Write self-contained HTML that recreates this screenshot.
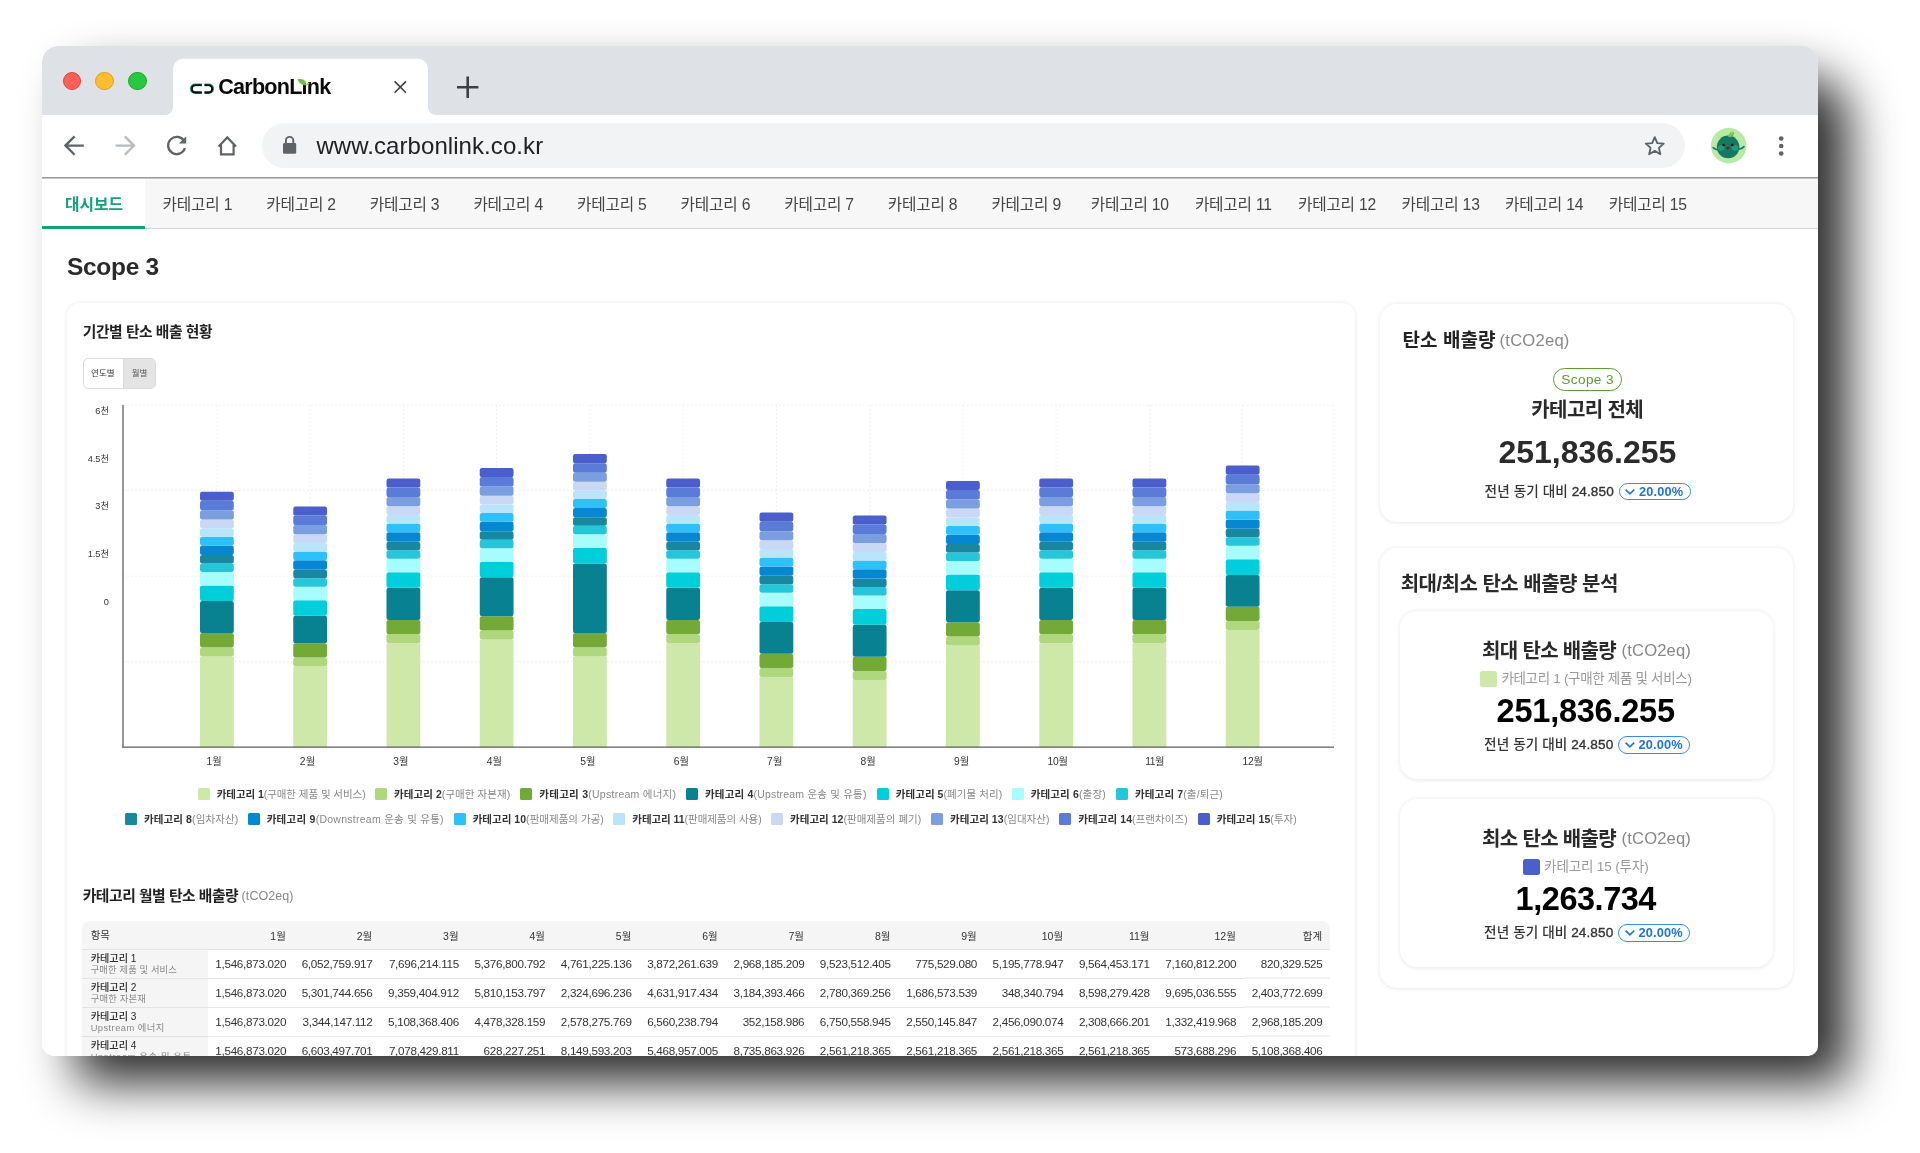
<!DOCTYPE html>
<html lang="ko"><head><meta charset="utf-8"><title>CarbonLink</title>
<style>
html,body{margin:0;padding:0;background:#fff;}
body{width:1920px;height:1153px;overflow:hidden;position:relative;font-family:"Liberation Sans","Noto Sans CJK KR",sans-serif;}
#shadow{position:absolute;left:42px;top:46px;width:1776px;height:1009.6px;border-radius:16px 46px 10px 14px;box-shadow:32px 28.5px 49px -2px rgba(0,0,0,.83);}
#win{position:absolute;left:42px;top:46px;width:1776px;height:1009.6px;border-radius:16.5px 16.5px 12.5px 12.5px;overflow:hidden;background:#fff;will-change:transform;}
#win div{position:absolute;box-sizing:border-box;}
#win svg{position:absolute;overflow:visible;}
.t{white-space:nowrap;}
.card{background:#fff;box-shadow:0 0.5px 4px rgba(0,0,0,.1);}
</style></head>
<body>
<div id="shadow"></div>
<div id="win">
<div style="left:0.00px;top:0.00px;width:1776.00px;height:69.00px;background:#dee1e6;"></div>
<div style="left:20.70px;top:25.80px;width:18.60px;height:18.60px;border-radius:50%;background:#ff5f57;border:0.5px solid #e0443e;"></div>
<div style="left:53.20px;top:25.80px;width:18.60px;height:18.60px;border-radius:50%;background:#febc2e;border:0.5px solid #dea123;"></div>
<div style="left:86.20px;top:25.80px;width:18.60px;height:18.60px;border-radius:50%;background:#28c840;border:0.5px solid #1aab29;"></div>
<svg style="left:0;top:0" width="1776" height="80" viewBox="42 46 1776 80"><path d="M164.5 115 C169.5 115 173 111.5 173 106.5 L173 69.3 C173 63.5 177.7 58.8 183.5 58.8 L417.5 58.8 C423.3 58.8 428 63.5 428 69.3 L428 106.5 C428 111.5 431.5 115 436.5 115 Z" fill="#fff"/><g fill="none" stroke-linecap="butt"><path d="M201.8 84.9 L195.4 84.9 C192.9 84.9 191.2 86.6 191.2 88.8 C191.2 91 192.9 92.7 195.4 92.7 L201.8 92.7" stroke="#1f9f7c" stroke-width="2.7"/><path d="M204.5 84.9 L208.6 84.9 C211.1 84.9 212.8 86.6 212.8 88.8 C212.8 91 211.1 92.7 208.6 92.7 L204.5 92.7" stroke="#1f9f7c" stroke-width="2.7"/><path d="M201.8 85.1 L195.6 85.1 C193.3 85.1 191.9 86.7 191.9 88.8 C191.9 90.9 193.3 92.5 195.6 92.5 L201.8 92.5" stroke="#0a0a0a" stroke-width="1.9"/><path d="M204.5 85.1 L208.4 85.1 C210.7 85.1 212.1 86.7 212.1 88.8 C212.1 90.9 210.7 92.5 208.4 92.5 L204.5 92.5" stroke="#0a0a0a" stroke-width="1.9"/></g><path d="M394.6 81.4 L406 92.8 M406 81.4 L394.6 92.8" stroke="#3c4043" stroke-width="1.6" fill="none"/><path d="M457 87.2 L478.4 87.2 M467.7 76.5 L467.7 97.9" stroke="#3c4043" stroke-width="2.6" fill="none"/></svg>
<div class="t" style="left:176.20px;top:28.30px;font-size:21.6px;line-height:26px;font-weight:700;color:#0a0a0a;letter-spacing:-0.768px;">CarbonL<span style="position:relative">i<span style="position:absolute;left:-0.5px;top:2.4px;width:7px;height:6.2px;background:#fff"></span><svg style="left:1.5px;top:1.1px" width="6" height="12" viewBox="0 0 6 12"><path d="M-5.65 4.5 C-2.5 3.4 1.7 4.3 2.7 7.2 L2.95 10.3 C0 10.5 -3.6 8.7 -5.65 4.5 Z" fill="#6dbe45"/><path d="M2.9 10.3 C3.2 8.6 4.8 7.5 6.7 7.8 C6.3 9.4 4.7 10.5 2.9 10.3 Z" fill="#8fd05f"/></svg></span>nk</div>
<div style="left:0.00px;top:69.00px;width:1776.00px;height:61.50px;background:#fff;"></div>
<div style="left:0.00px;top:130.50px;width:1776.00px;height:1.00px;background:#9b9b9b;"></div>
<div style="left:0.00px;top:131.50px;width:1776.00px;height:1.00px;background:#c4c4c4;"></div>
<div style="left:220.00px;top:76.50px;width:1423.00px;height:45.50px;background:#f1f3f4;border-radius:23px;"></div>
<div class="t" style="left:274.40px;top:84.50px;font-size:24px;line-height:30px;font-weight:400;color:#202124;letter-spacing:0.07px;">www.carbonlink.co.kr</div>
<svg style="left:0;top:60px" width="1776" height="70" viewBox="42 106 1776 70"><g fill="none" stroke="#5f6368" stroke-width="2.3" stroke-linejoin="miter"><path d="M83.8 145.6 L65.8 145.6 M74.6 136.4 L65.4 145.6 L74.6 154.8"/></g><g fill="none" stroke="#b7babe" stroke-width="2.3"><path d="M115.6 145.6 L133.6 145.6 M124.8 136.4 L134 145.6 L124.8 154.8"/></g><g fill="none" stroke="#5f6368" stroke-width="2.3"><path d="M184.2 141.2 A8.6 8.6 0 1 0 184.9 148.2"/></g><path d="M186.2 136.2 L186.2 143.6 L178.8 143.6 Z" fill="#5f6368"/><path d="M218.6 146.4 L227.3 137.4 L236 146.4 M221 144.6 L221 154.4 L233.6 154.4 L233.6 144.6" fill="none" stroke="#5f6368" stroke-width="2.2" stroke-linejoin="miter"/><rect x="283" y="143" width="13.2" height="10.8" rx="1.4" fill="#5f6368"/><path d="M285.9 143.4 L285.9 140.6 A3.7 3.7 0 0 1 293.3 140.6 L293.3 143.4" fill="none" stroke="#5f6368" stroke-width="1.9"/><path transform="translate(1654.75 146.2) scale(0.94) translate(-1654.75 -146.2)" d="M1654.75 136.6 L1657.5 142.9 L1664.3 143.5 L1659.15 148 L1660.7 154.7 L1654.75 151.15 L1648.8 154.7 L1650.35 148 L1645.2 143.5 L1652 142.9 Z" fill="none" stroke="#5f6368" stroke-width="2" stroke-linejoin="round"/><circle cx="1728.7" cy="145.6" r="17.8" fill="#b9eaa5"/><path d="M1713.2 147.6 Q1716 150.4 1719 149.6 M1744 146.6 Q1741.4 149.4 1738.4 148.8" stroke="#15785f" stroke-width="1.6" fill="none" stroke-linecap="round"/><circle cx="1728.1" cy="146.9" r="11.3" fill="#15785f"/><ellipse cx="1721.2" cy="147.9" rx="3.3" ry="2.9" fill="#1f9b7c"/><ellipse cx="1735" cy="147.9" rx="3.3" ry="2.9" fill="#1f9b7c"/><circle cx="1723.6" cy="145" r="1.35" fill="#07120e"/><circle cx="1732.2" cy="145" r="1.35" fill="#07120e"/><path d="M1726.3 147.3 Q1728 146.6 1729.7 147.3 Q1728.9 149.7 1728 149.7 Q1727.1 149.7 1726.3 147.3 Z" fill="#7a1220"/><path d="M1728.2 136.6 Q1728.4 132.6 1733.6 131.4 Q1735.4 135.4 1730.2 137.4 Z" fill="#6fc04a"/><path d="M1729 136.6 L1733.2 132.2" stroke="#b9eaa5" stroke-width="0.6"/><circle cx="1781.2" cy="138.5" r="2.35" fill="#5f6368"/><circle cx="1781.2" cy="146" r="2.35" fill="#5f6368"/><circle cx="1781.2" cy="153.5" r="2.35" fill="#5f6368"/></svg>
<div style="left:0.00px;top:132.50px;width:1776.00px;height:50.00px;background:#f7f7f7;border-bottom:1px solid #d4d4d4;"></div>
<div style="left:0.00px;top:132.50px;width:103.30px;height:50.00px;background:#fff;border-bottom:3.5px solid #10a27a;"></div>
<div class="t" style="left:0.10px;width:104px;text-align:center;top:147.20px;font-size:15.8px;line-height:24px;font-weight:700;color:#10a27a;">대시보드</div>
<div class="t" style="left:100.40px;width:110px;text-align:center;top:147.20px;font-size:15.7px;line-height:24px;font-weight:400;color:#444;letter-spacing:-0.2px;">카테고리 1</div>
<div class="t" style="left:204.00px;width:110px;text-align:center;top:147.20px;font-size:15.7px;line-height:24px;font-weight:400;color:#444;letter-spacing:-0.2px;">카테고리 2</div>
<div class="t" style="left:307.60px;width:110px;text-align:center;top:147.20px;font-size:15.7px;line-height:24px;font-weight:400;color:#444;letter-spacing:-0.2px;">카테고리 3</div>
<div class="t" style="left:411.20px;width:110px;text-align:center;top:147.20px;font-size:15.7px;line-height:24px;font-weight:400;color:#444;letter-spacing:-0.2px;">카테고리 4</div>
<div class="t" style="left:514.80px;width:110px;text-align:center;top:147.20px;font-size:15.7px;line-height:24px;font-weight:400;color:#444;letter-spacing:-0.2px;">카테고리 5</div>
<div class="t" style="left:618.40px;width:110px;text-align:center;top:147.20px;font-size:15.7px;line-height:24px;font-weight:400;color:#444;letter-spacing:-0.2px;">카테고리 6</div>
<div class="t" style="left:722.00px;width:110px;text-align:center;top:147.20px;font-size:15.7px;line-height:24px;font-weight:400;color:#444;letter-spacing:-0.2px;">카테고리 7</div>
<div class="t" style="left:825.60px;width:110px;text-align:center;top:147.20px;font-size:15.7px;line-height:24px;font-weight:400;color:#444;letter-spacing:-0.2px;">카테고리 8</div>
<div class="t" style="left:929.20px;width:110px;text-align:center;top:147.20px;font-size:15.7px;line-height:24px;font-weight:400;color:#444;letter-spacing:-0.2px;">카테고리 9</div>
<div class="t" style="left:1032.80px;width:110px;text-align:center;top:147.20px;font-size:15.7px;line-height:24px;font-weight:400;color:#444;letter-spacing:-0.2px;">카테고리 10</div>
<div class="t" style="left:1136.40px;width:110px;text-align:center;top:147.20px;font-size:15.7px;line-height:24px;font-weight:400;color:#444;letter-spacing:-0.2px;">카테고리 11</div>
<div class="t" style="left:1240.00px;width:110px;text-align:center;top:147.20px;font-size:15.7px;line-height:24px;font-weight:400;color:#444;letter-spacing:-0.2px;">카테고리 12</div>
<div class="t" style="left:1343.60px;width:110px;text-align:center;top:147.20px;font-size:15.7px;line-height:24px;font-weight:400;color:#444;letter-spacing:-0.2px;">카테고리 13</div>
<div class="t" style="left:1447.20px;width:110px;text-align:center;top:147.20px;font-size:15.7px;line-height:24px;font-weight:400;color:#444;letter-spacing:-0.2px;">카테고리 14</div>
<div class="t" style="left:1550.80px;width:110px;text-align:center;top:147.20px;font-size:15.7px;line-height:24px;font-weight:400;color:#444;letter-spacing:-0.2px;">카테고리 15</div>
<div class="t" style="left:25.00px;top:206.20px;font-size:24.5px;line-height:30px;font-weight:700;color:#2a2a2a;letter-spacing:-0.3px;">Scope 3</div>
<div class="card" style="left:25.00px;top:257.00px;width:1288.00px;height:800.00px;border-radius:13px;"></div>
<div class="t" style="left:40.75px;top:274.80px;font-size:14.8px;line-height:22px;font-weight:700;color:#222;letter-spacing:-0.455px;">기간별 탄소 배출 현황</div>
<div style="left:40.70px;top:312.00px;width:73.40px;height:30.80px;border:1px solid #d9d9d9;border-radius:5px;background:#fff;overflow:hidden;"><div style="left:39.3px;top:0;width:33px;height:29px;background:#e4e4e4;border-left:1px solid #d9d9d9;"></div></div>
<div class="t" style="left:40.80px;width:40px;text-align:center;top:321.20px;font-size:8.5px;line-height:12px;font-weight:400;color:#333;">연도별</div>
<div class="t" style="left:77.60px;width:40px;text-align:center;top:321.20px;font-size:8.5px;line-height:12px;font-weight:400;color:#555;">월별</div>
<svg style="left:0;top:334px" width="1776" height="400" viewBox="42 380 1776 400"><g stroke="#ececec" stroke-width="1" stroke-dasharray="1.5 2.5" fill="none"><path d="M123 405.0 H1334"/><path d="M123 490.5 H1334"/><path d="M123 576.0 H1334"/><path d="M123 661.5 H1334"/><path d="M216.9 405 V747"/><path d="M310.1 405 V747"/><path d="M403.4 405 V747"/><path d="M496.6 405 V747"/><path d="M589.9 405 V747"/><path d="M683.1 405 V747"/><path d="M776.4 405 V747"/><path d="M869.6 405 V747"/><path d="M962.9 405 V747"/><path d="M1056.2 405 V747"/><path d="M1149.4 405 V747"/><path d="M1242.7 405 V747"/><path d="M1334 405 V747"/></g><rect x="200.00" y="656.40" width="33.8" height="91.00" rx="1.2" fill="#cee8aa"/><rect x="200.00" y="647.30" width="33.8" height="9.10" rx="2.2" fill="#afd87e"/><rect x="200.00" y="633.10" width="33.8" height="14.20" rx="2.2" fill="#72a937"/><rect x="200.00" y="601.00" width="33.8" height="32.10" rx="2.2" fill="#088291"/><rect x="200.00" y="585.40" width="33.8" height="15.60" rx="2.2" fill="#00cedb"/><rect x="200.00" y="571.90" width="33.8" height="13.50" rx="2.2" fill="#a7fdfd"/><rect x="200.00" y="563.40" width="33.8" height="8.50" rx="2.2" fill="#26c6da"/><rect x="200.00" y="554.90" width="33.8" height="8.50" rx="2.2" fill="#1887a0"/><rect x="200.00" y="545.50" width="33.8" height="9.40" rx="2.2" fill="#0687d2"/><rect x="200.00" y="536.70" width="33.8" height="8.80" rx="2.2" fill="#2ec0fb"/><rect x="200.00" y="528.20" width="33.8" height="8.50" rx="2.2" fill="#b9e5fb"/><rect x="200.00" y="519.40" width="33.8" height="8.80" rx="2.2" fill="#c9d8f4"/><rect x="200.00" y="510.30" width="33.8" height="9.10" rx="2.2" fill="#7b9ee0"/><rect x="200.00" y="500.80" width="33.8" height="9.50" rx="2.2" fill="#5b7bd9"/><rect x="200.00" y="491.70" width="33.8" height="9.10" rx="2.2" fill="#4a5fcb"/><rect x="293.25" y="666.50" width="33.8" height="80.90" rx="1.2" fill="#cee8aa"/><rect x="293.25" y="657.40" width="33.8" height="9.10" rx="2.2" fill="#afd87e"/><rect x="293.25" y="643.20" width="33.8" height="14.20" rx="2.2" fill="#72a937"/><rect x="293.25" y="615.80" width="33.8" height="27.40" rx="2.2" fill="#088291"/><rect x="293.25" y="600.20" width="33.8" height="15.60" rx="2.2" fill="#00cedb"/><rect x="293.25" y="586.70" width="33.8" height="13.50" rx="2.2" fill="#a7fdfd"/><rect x="293.25" y="578.20" width="33.8" height="8.50" rx="2.2" fill="#26c6da"/><rect x="293.25" y="569.70" width="33.8" height="8.50" rx="2.2" fill="#1887a0"/><rect x="293.25" y="560.30" width="33.8" height="9.40" rx="2.2" fill="#0687d2"/><rect x="293.25" y="551.50" width="33.8" height="8.80" rx="2.2" fill="#2ec0fb"/><rect x="293.25" y="543.00" width="33.8" height="8.50" rx="2.2" fill="#b9e5fb"/><rect x="293.25" y="534.20" width="33.8" height="8.80" rx="2.2" fill="#c9d8f4"/><rect x="293.25" y="525.10" width="33.8" height="9.10" rx="2.2" fill="#7b9ee0"/><rect x="293.25" y="515.60" width="33.8" height="9.50" rx="2.2" fill="#5b7bd9"/><rect x="293.25" y="506.50" width="33.8" height="9.10" rx="2.2" fill="#4a5fcb"/><rect x="386.50" y="643.20" width="33.8" height="104.20" rx="1.2" fill="#cee8aa"/><rect x="386.50" y="634.10" width="33.8" height="9.10" rx="2.2" fill="#afd87e"/><rect x="386.50" y="619.90" width="33.8" height="14.20" rx="2.2" fill="#72a937"/><rect x="386.50" y="587.80" width="33.8" height="32.10" rx="2.2" fill="#088291"/><rect x="386.50" y="572.20" width="33.8" height="15.60" rx="2.2" fill="#00cedb"/><rect x="386.50" y="558.70" width="33.8" height="13.50" rx="2.2" fill="#a7fdfd"/><rect x="386.50" y="550.20" width="33.8" height="8.50" rx="2.2" fill="#26c6da"/><rect x="386.50" y="541.70" width="33.8" height="8.50" rx="2.2" fill="#1887a0"/><rect x="386.50" y="532.30" width="33.8" height="9.40" rx="2.2" fill="#0687d2"/><rect x="386.50" y="523.50" width="33.8" height="8.80" rx="2.2" fill="#2ec0fb"/><rect x="386.50" y="515.00" width="33.8" height="8.50" rx="2.2" fill="#b9e5fb"/><rect x="386.50" y="506.20" width="33.8" height="8.80" rx="2.2" fill="#c9d8f4"/><rect x="386.50" y="497.10" width="33.8" height="9.10" rx="2.2" fill="#7b9ee0"/><rect x="386.50" y="487.60" width="33.8" height="9.50" rx="2.2" fill="#5b7bd9"/><rect x="386.50" y="478.50" width="33.8" height="9.10" rx="2.2" fill="#4a5fcb"/><rect x="479.75" y="639.50" width="33.8" height="107.90" rx="1.2" fill="#cee8aa"/><rect x="479.75" y="630.40" width="33.8" height="9.10" rx="2.2" fill="#afd87e"/><rect x="479.75" y="616.20" width="33.8" height="14.20" rx="2.2" fill="#72a937"/><rect x="479.75" y="577.30" width="33.8" height="38.90" rx="2.2" fill="#088291"/><rect x="479.75" y="561.70" width="33.8" height="15.60" rx="2.2" fill="#00cedb"/><rect x="479.75" y="548.20" width="33.8" height="13.50" rx="2.2" fill="#a7fdfd"/><rect x="479.75" y="539.70" width="33.8" height="8.50" rx="2.2" fill="#26c6da"/><rect x="479.75" y="531.20" width="33.8" height="8.50" rx="2.2" fill="#1887a0"/><rect x="479.75" y="521.80" width="33.8" height="9.40" rx="2.2" fill="#0687d2"/><rect x="479.75" y="513.00" width="33.8" height="8.80" rx="2.2" fill="#2ec0fb"/><rect x="479.75" y="504.50" width="33.8" height="8.50" rx="2.2" fill="#b9e5fb"/><rect x="479.75" y="495.70" width="33.8" height="8.80" rx="2.2" fill="#c9d8f4"/><rect x="479.75" y="486.60" width="33.8" height="9.10" rx="2.2" fill="#7b9ee0"/><rect x="479.75" y="477.10" width="33.8" height="9.50" rx="2.2" fill="#5b7bd9"/><rect x="479.75" y="468.00" width="33.8" height="9.10" rx="2.2" fill="#4a5fcb"/><rect x="573.00" y="656.40" width="33.8" height="91.00" rx="1.2" fill="#cee8aa"/><rect x="573.00" y="647.30" width="33.8" height="9.10" rx="2.2" fill="#afd87e"/><rect x="573.00" y="633.10" width="33.8" height="14.20" rx="2.2" fill="#72a937"/><rect x="573.00" y="563.40" width="33.8" height="69.70" rx="2.2" fill="#088291"/><rect x="573.00" y="547.80" width="33.8" height="15.60" rx="2.2" fill="#00cedb"/><rect x="573.00" y="534.30" width="33.8" height="13.50" rx="2.2" fill="#a7fdfd"/><rect x="573.00" y="525.80" width="33.8" height="8.50" rx="2.2" fill="#26c6da"/><rect x="573.00" y="517.30" width="33.8" height="8.50" rx="2.2" fill="#1887a0"/><rect x="573.00" y="507.90" width="33.8" height="9.40" rx="2.2" fill="#0687d2"/><rect x="573.00" y="499.10" width="33.8" height="8.80" rx="2.2" fill="#2ec0fb"/><rect x="573.00" y="490.60" width="33.8" height="8.50" rx="2.2" fill="#b9e5fb"/><rect x="573.00" y="481.80" width="33.8" height="8.80" rx="2.2" fill="#c9d8f4"/><rect x="573.00" y="472.70" width="33.8" height="9.10" rx="2.2" fill="#7b9ee0"/><rect x="573.00" y="463.20" width="33.8" height="9.50" rx="2.2" fill="#5b7bd9"/><rect x="573.00" y="454.10" width="33.8" height="9.10" rx="2.2" fill="#4a5fcb"/><rect x="666.25" y="643.20" width="33.8" height="104.20" rx="1.2" fill="#cee8aa"/><rect x="666.25" y="634.10" width="33.8" height="9.10" rx="2.2" fill="#afd87e"/><rect x="666.25" y="619.90" width="33.8" height="14.20" rx="2.2" fill="#72a937"/><rect x="666.25" y="587.80" width="33.8" height="32.10" rx="2.2" fill="#088291"/><rect x="666.25" y="572.20" width="33.8" height="15.60" rx="2.2" fill="#00cedb"/><rect x="666.25" y="558.70" width="33.8" height="13.50" rx="2.2" fill="#a7fdfd"/><rect x="666.25" y="550.20" width="33.8" height="8.50" rx="2.2" fill="#26c6da"/><rect x="666.25" y="541.70" width="33.8" height="8.50" rx="2.2" fill="#1887a0"/><rect x="666.25" y="532.30" width="33.8" height="9.40" rx="2.2" fill="#0687d2"/><rect x="666.25" y="523.50" width="33.8" height="8.80" rx="2.2" fill="#2ec0fb"/><rect x="666.25" y="515.00" width="33.8" height="8.50" rx="2.2" fill="#b9e5fb"/><rect x="666.25" y="506.20" width="33.8" height="8.80" rx="2.2" fill="#c9d8f4"/><rect x="666.25" y="497.10" width="33.8" height="9.10" rx="2.2" fill="#7b9ee0"/><rect x="666.25" y="487.60" width="33.8" height="9.50" rx="2.2" fill="#5b7bd9"/><rect x="666.25" y="478.50" width="33.8" height="9.10" rx="2.2" fill="#4a5fcb"/><rect x="759.50" y="677.00" width="33.8" height="70.40" rx="1.2" fill="#cee8aa"/><rect x="759.50" y="667.90" width="33.8" height="9.10" rx="2.2" fill="#afd87e"/><rect x="759.50" y="653.70" width="33.8" height="14.20" rx="2.2" fill="#72a937"/><rect x="759.50" y="621.90" width="33.8" height="31.80" rx="2.2" fill="#088291"/><rect x="759.50" y="606.30" width="33.8" height="15.60" rx="2.2" fill="#00cedb"/><rect x="759.50" y="592.80" width="33.8" height="13.50" rx="2.2" fill="#a7fdfd"/><rect x="759.50" y="584.30" width="33.8" height="8.50" rx="2.2" fill="#26c6da"/><rect x="759.50" y="575.80" width="33.8" height="8.50" rx="2.2" fill="#1887a0"/><rect x="759.50" y="566.40" width="33.8" height="9.40" rx="2.2" fill="#0687d2"/><rect x="759.50" y="557.60" width="33.8" height="8.80" rx="2.2" fill="#2ec0fb"/><rect x="759.50" y="549.10" width="33.8" height="8.50" rx="2.2" fill="#b9e5fb"/><rect x="759.50" y="540.30" width="33.8" height="8.80" rx="2.2" fill="#c9d8f4"/><rect x="759.50" y="531.20" width="33.8" height="9.10" rx="2.2" fill="#7b9ee0"/><rect x="759.50" y="521.70" width="33.8" height="9.50" rx="2.2" fill="#5b7bd9"/><rect x="759.50" y="512.60" width="33.8" height="9.10" rx="2.2" fill="#4a5fcb"/><rect x="852.75" y="680.10" width="33.8" height="67.30" rx="1.2" fill="#cee8aa"/><rect x="852.75" y="671.00" width="33.8" height="9.10" rx="2.2" fill="#afd87e"/><rect x="852.75" y="656.80" width="33.8" height="14.20" rx="2.2" fill="#72a937"/><rect x="852.75" y="624.70" width="33.8" height="32.10" rx="2.2" fill="#088291"/><rect x="852.75" y="609.10" width="33.8" height="15.60" rx="2.2" fill="#00cedb"/><rect x="852.75" y="595.60" width="33.8" height="13.50" rx="2.2" fill="#a7fdfd"/><rect x="852.75" y="587.10" width="33.8" height="8.50" rx="2.2" fill="#26c6da"/><rect x="852.75" y="578.60" width="33.8" height="8.50" rx="2.2" fill="#1887a0"/><rect x="852.75" y="569.20" width="33.8" height="9.40" rx="2.2" fill="#0687d2"/><rect x="852.75" y="560.40" width="33.8" height="8.80" rx="2.2" fill="#2ec0fb"/><rect x="852.75" y="551.90" width="33.8" height="8.50" rx="2.2" fill="#b9e5fb"/><rect x="852.75" y="543.10" width="33.8" height="8.80" rx="2.2" fill="#c9d8f4"/><rect x="852.75" y="534.00" width="33.8" height="9.10" rx="2.2" fill="#7b9ee0"/><rect x="852.75" y="524.50" width="33.8" height="9.50" rx="2.2" fill="#5b7bd9"/><rect x="852.75" y="515.40" width="33.8" height="9.10" rx="2.2" fill="#4a5fcb"/><rect x="946.00" y="645.60" width="33.8" height="101.80" rx="1.2" fill="#cee8aa"/><rect x="946.00" y="636.50" width="33.8" height="9.10" rx="2.2" fill="#afd87e"/><rect x="946.00" y="622.30" width="33.8" height="14.20" rx="2.2" fill="#72a937"/><rect x="946.00" y="590.20" width="33.8" height="32.10" rx="2.2" fill="#088291"/><rect x="946.00" y="574.60" width="33.8" height="15.60" rx="2.2" fill="#00cedb"/><rect x="946.00" y="561.10" width="33.8" height="13.50" rx="2.2" fill="#a7fdfd"/><rect x="946.00" y="552.60" width="33.8" height="8.50" rx="2.2" fill="#26c6da"/><rect x="946.00" y="544.10" width="33.8" height="8.50" rx="2.2" fill="#1887a0"/><rect x="946.00" y="534.70" width="33.8" height="9.40" rx="2.2" fill="#0687d2"/><rect x="946.00" y="525.90" width="33.8" height="8.80" rx="2.2" fill="#2ec0fb"/><rect x="946.00" y="517.40" width="33.8" height="8.50" rx="2.2" fill="#b9e5fb"/><rect x="946.00" y="508.60" width="33.8" height="8.80" rx="2.2" fill="#c9d8f4"/><rect x="946.00" y="499.50" width="33.8" height="9.10" rx="2.2" fill="#7b9ee0"/><rect x="946.00" y="490.00" width="33.8" height="9.50" rx="2.2" fill="#5b7bd9"/><rect x="946.00" y="480.90" width="33.8" height="9.10" rx="2.2" fill="#4a5fcb"/><rect x="1039.25" y="643.20" width="33.8" height="104.20" rx="1.2" fill="#cee8aa"/><rect x="1039.25" y="634.10" width="33.8" height="9.10" rx="2.2" fill="#afd87e"/><rect x="1039.25" y="619.90" width="33.8" height="14.20" rx="2.2" fill="#72a937"/><rect x="1039.25" y="587.80" width="33.8" height="32.10" rx="2.2" fill="#088291"/><rect x="1039.25" y="572.20" width="33.8" height="15.60" rx="2.2" fill="#00cedb"/><rect x="1039.25" y="558.70" width="33.8" height="13.50" rx="2.2" fill="#a7fdfd"/><rect x="1039.25" y="550.20" width="33.8" height="8.50" rx="2.2" fill="#26c6da"/><rect x="1039.25" y="541.70" width="33.8" height="8.50" rx="2.2" fill="#1887a0"/><rect x="1039.25" y="532.30" width="33.8" height="9.40" rx="2.2" fill="#0687d2"/><rect x="1039.25" y="523.50" width="33.8" height="8.80" rx="2.2" fill="#2ec0fb"/><rect x="1039.25" y="515.00" width="33.8" height="8.50" rx="2.2" fill="#b9e5fb"/><rect x="1039.25" y="506.20" width="33.8" height="8.80" rx="2.2" fill="#c9d8f4"/><rect x="1039.25" y="497.10" width="33.8" height="9.10" rx="2.2" fill="#7b9ee0"/><rect x="1039.25" y="487.60" width="33.8" height="9.50" rx="2.2" fill="#5b7bd9"/><rect x="1039.25" y="478.50" width="33.8" height="9.10" rx="2.2" fill="#4a5fcb"/><rect x="1132.50" y="643.20" width="33.8" height="104.20" rx="1.2" fill="#cee8aa"/><rect x="1132.50" y="634.10" width="33.8" height="9.10" rx="2.2" fill="#afd87e"/><rect x="1132.50" y="619.90" width="33.8" height="14.20" rx="2.2" fill="#72a937"/><rect x="1132.50" y="587.80" width="33.8" height="32.10" rx="2.2" fill="#088291"/><rect x="1132.50" y="572.20" width="33.8" height="15.60" rx="2.2" fill="#00cedb"/><rect x="1132.50" y="558.70" width="33.8" height="13.50" rx="2.2" fill="#a7fdfd"/><rect x="1132.50" y="550.20" width="33.8" height="8.50" rx="2.2" fill="#26c6da"/><rect x="1132.50" y="541.70" width="33.8" height="8.50" rx="2.2" fill="#1887a0"/><rect x="1132.50" y="532.30" width="33.8" height="9.40" rx="2.2" fill="#0687d2"/><rect x="1132.50" y="523.50" width="33.8" height="8.80" rx="2.2" fill="#2ec0fb"/><rect x="1132.50" y="515.00" width="33.8" height="8.50" rx="2.2" fill="#b9e5fb"/><rect x="1132.50" y="506.20" width="33.8" height="8.80" rx="2.2" fill="#c9d8f4"/><rect x="1132.50" y="497.10" width="33.8" height="9.10" rx="2.2" fill="#7b9ee0"/><rect x="1132.50" y="487.60" width="33.8" height="9.50" rx="2.2" fill="#5b7bd9"/><rect x="1132.50" y="478.50" width="33.8" height="9.10" rx="2.2" fill="#4a5fcb"/><rect x="1225.75" y="630.00" width="33.8" height="117.40" rx="1.2" fill="#cee8aa"/><rect x="1225.75" y="620.90" width="33.8" height="9.10" rx="2.2" fill="#afd87e"/><rect x="1225.75" y="606.70" width="33.8" height="14.20" rx="2.2" fill="#72a937"/><rect x="1225.75" y="574.90" width="33.8" height="31.80" rx="2.2" fill="#088291"/><rect x="1225.75" y="559.30" width="33.8" height="15.60" rx="2.2" fill="#00cedb"/><rect x="1225.75" y="545.80" width="33.8" height="13.50" rx="2.2" fill="#a7fdfd"/><rect x="1225.75" y="537.30" width="33.8" height="8.50" rx="2.2" fill="#26c6da"/><rect x="1225.75" y="528.80" width="33.8" height="8.50" rx="2.2" fill="#1887a0"/><rect x="1225.75" y="519.40" width="33.8" height="9.40" rx="2.2" fill="#0687d2"/><rect x="1225.75" y="510.60" width="33.8" height="8.80" rx="2.2" fill="#2ec0fb"/><rect x="1225.75" y="502.10" width="33.8" height="8.50" rx="2.2" fill="#b9e5fb"/><rect x="1225.75" y="493.30" width="33.8" height="8.80" rx="2.2" fill="#c9d8f4"/><rect x="1225.75" y="484.20" width="33.8" height="9.10" rx="2.2" fill="#7b9ee0"/><rect x="1225.75" y="474.70" width="33.8" height="9.50" rx="2.2" fill="#5b7bd9"/><rect x="1225.75" y="465.60" width="33.8" height="9.10" rx="2.2" fill="#4a5fcb"/><path d="M123 405 V747.6" stroke="#757575" stroke-width="1.5" fill="none"/><path d="M122.3 747.1 H1334" stroke="#5c5c5c" stroke-width="1.1" fill="none"/></svg>
<div class="t" style="left:6.90px;width:60px;text-align:right;top:358.30px;font-size:9.2px;line-height:14px;font-weight:400;color:#333;">6천</div>
<div class="t" style="left:6.90px;width:60px;text-align:right;top:405.85px;font-size:9.2px;line-height:14px;font-weight:400;color:#333;">4.5천</div>
<div class="t" style="left:6.90px;width:60px;text-align:right;top:453.40px;font-size:9.2px;line-height:14px;font-weight:400;color:#333;">3천</div>
<div class="t" style="left:6.90px;width:60px;text-align:right;top:500.95px;font-size:9.2px;line-height:14px;font-weight:400;color:#333;">1.5천</div>
<div class="t" style="left:6.90px;width:60px;text-align:right;top:548.50px;font-size:9.2px;line-height:14px;font-weight:400;color:#333;">0</div>
<div class="t" style="left:164.40px;top:707.60px;font-size:10.3px;line-height:16px;font-weight:400;color:#333;letter-spacing:0.098px;">1월</div>
<div class="t" style="left:257.85px;top:707.60px;font-size:10.3px;line-height:16px;font-weight:400;color:#333;letter-spacing:0.098px;">2월</div>
<div class="t" style="left:351.30px;top:707.60px;font-size:10.3px;line-height:16px;font-weight:400;color:#333;letter-spacing:0.098px;">3월</div>
<div class="t" style="left:444.75px;top:707.60px;font-size:10.3px;line-height:16px;font-weight:400;color:#333;letter-spacing:0.098px;">4월</div>
<div class="t" style="left:538.20px;top:707.60px;font-size:10.3px;line-height:16px;font-weight:400;color:#333;letter-spacing:0.098px;">5월</div>
<div class="t" style="left:631.65px;top:707.60px;font-size:10.3px;line-height:16px;font-weight:400;color:#333;letter-spacing:0.098px;">6월</div>
<div class="t" style="left:725.10px;top:707.60px;font-size:10.3px;line-height:16px;font-weight:400;color:#333;letter-spacing:0.098px;">7월</div>
<div class="t" style="left:818.55px;top:707.60px;font-size:10.3px;line-height:16px;font-weight:400;color:#333;letter-spacing:0.098px;">8월</div>
<div class="t" style="left:912.00px;top:707.60px;font-size:10.3px;line-height:16px;font-weight:400;color:#333;letter-spacing:0.098px;">9월</div>
<div class="t" style="left:1005.50px;top:707.60px;font-size:10.3px;line-height:16px;font-weight:400;color:#333;letter-spacing:-0.246px;">10월</div>
<div class="t" style="left:1103.30px;top:707.60px;font-size:10.3px;line-height:16px;font-weight:400;color:#333;letter-spacing:-0.524px;">11월</div>
<div class="t" style="left:1200.50px;top:707.60px;font-size:10.3px;line-height:16px;font-weight:400;color:#333;letter-spacing:-0.246px;">12월</div>
<div style="left:155.70px;top:741.80px;width:12.20px;height:12.20px;background:#cee8aa;border-radius:1.5px;"></div>
<div class="t lg" style="left:174.70px;top:740.30px;font-size:10.5px;line-height:16px;font-weight:400;color:#888;letter-spacing:-0.060px;"><b style="color:#333">카테고리 1</b>(구매한 제품 및 서비스)</div>
<div style="left:333.00px;top:741.80px;width:12.20px;height:12.20px;background:#afd87e;border-radius:1.5px;"></div>
<div class="t lg" style="left:352.00px;top:740.30px;font-size:10.5px;line-height:16px;font-weight:400;color:#888;letter-spacing:0.068px;"><b style="color:#333">카테고리 2</b>(구매한 자본재)</div>
<div style="left:478.30px;top:741.80px;width:12.20px;height:12.20px;background:#72a937;border-radius:1.5px;"></div>
<div class="t lg" style="left:497.30px;top:740.30px;font-size:10.5px;line-height:16px;font-weight:400;color:#888;letter-spacing:0.259px;"><b style="color:#333">카테고리 3</b>(Upstream 에너지)</div>
<div style="left:644.00px;top:741.80px;width:12.20px;height:12.20px;background:#088291;border-radius:1.5px;"></div>
<div class="t lg" style="left:663.00px;top:740.30px;font-size:10.5px;line-height:16px;font-weight:400;color:#888;letter-spacing:0.193px;"><b style="color:#333">카테고리 4</b>(Upstream 운송 및 유통)</div>
<div style="left:834.70px;top:741.80px;width:12.20px;height:12.20px;background:#00cedb;border-radius:1.5px;"></div>
<div class="t lg" style="left:853.70px;top:740.30px;font-size:10.5px;line-height:16px;font-weight:400;color:#888;letter-spacing:0.070px;"><b style="color:#333">카테고리 5</b>(폐기물 처리)</div>
<div style="left:969.70px;top:741.80px;width:12.20px;height:12.20px;background:#a7fdfd;border-radius:1.5px;"></div>
<div class="t lg" style="left:988.70px;top:740.30px;font-size:10.5px;line-height:16px;font-weight:400;color:#888;letter-spacing:0.147px;"><b style="color:#333">카테고리 6</b>(출장)</div>
<div style="left:1074.00px;top:741.80px;width:12.20px;height:12.20px;background:#26c6da;border-radius:1.5px;"></div>
<div class="t lg" style="left:1093.00px;top:740.30px;font-size:10.5px;line-height:16px;font-weight:400;color:#888;letter-spacing:0.134px;"><b style="color:#333">카테고리 7</b>(출/퇴근)</div>
<div style="left:83.00px;top:766.80px;width:12.20px;height:12.20px;background:#1887a0;border-radius:1.5px;"></div>
<div class="t lg" style="left:102.00px;top:765.30px;font-size:10.5px;line-height:16px;font-weight:400;color:#888;letter-spacing:0.104px;"><b style="color:#333">카테고리 8</b>(임차자산)</div>
<div style="left:205.70px;top:766.80px;width:12.20px;height:12.20px;background:#0687d2;border-radius:1.5px;"></div>
<div class="t lg" style="left:224.70px;top:765.30px;font-size:10.5px;line-height:16px;font-weight:400;color:#888;letter-spacing:0.262px;"><b style="color:#333">카테고리 9</b>(Downstream 운송 및 유통)</div>
<div style="left:411.70px;top:766.80px;width:12.20px;height:12.20px;background:#2ec0fb;border-radius:1.5px;"></div>
<div class="t lg" style="left:430.70px;top:765.30px;font-size:10.5px;line-height:16px;font-weight:400;color:#888;letter-spacing:0.025px;"><b style="color:#333">카테고리 10</b>(판매제품의 가공)</div>
<div style="left:571.30px;top:766.80px;width:12.20px;height:12.20px;background:#b9e5fb;border-radius:1.5px;"></div>
<div class="t lg" style="left:590.30px;top:765.30px;font-size:10.5px;line-height:16px;font-weight:400;color:#888;letter-spacing:-0.053px;"><b style="color:#333">카테고리 11</b>(판매제품의 사용)</div>
<div style="left:729.00px;top:766.80px;width:12.20px;height:12.20px;background:#c9d8f4;border-radius:1.5px;"></div>
<div class="t lg" style="left:748.00px;top:765.30px;font-size:10.5px;line-height:16px;font-weight:400;color:#888;letter-spacing:0.031px;"><b style="color:#333">카테고리 12</b>(판매제품의 폐기)</div>
<div style="left:889.00px;top:766.80px;width:12.20px;height:12.20px;background:#7b9ee0;border-radius:1.5px;"></div>
<div class="t lg" style="left:908.00px;top:765.30px;font-size:10.5px;line-height:16px;font-weight:400;color:#888;letter-spacing:0.055px;"><b style="color:#333">카테고리 13</b>(임대자산)</div>
<div style="left:1017.30px;top:766.80px;width:12.20px;height:12.20px;background:#5b7bd9;border-radius:1.5px;"></div>
<div class="t lg" style="left:1036.30px;top:765.30px;font-size:10.5px;line-height:16px;font-weight:400;color:#888;letter-spacing:0.075px;"><b style="color:#333">카테고리 14</b>(프랜차이즈)</div>
<div style="left:1155.70px;top:766.80px;width:12.20px;height:12.20px;background:#4a5fcb;border-radius:1.5px;"></div>
<div class="t lg" style="left:1174.70px;top:765.30px;font-size:10.5px;line-height:16px;font-weight:400;color:#888;letter-spacing:0.057px;"><b style="color:#333">카테고리 15</b>(투자)</div>
<div class="t" style="left:40.70px;top:838.60px;font-size:14.8px;line-height:22px;font-weight:700;color:#222;letter-spacing:-0.464px;">카테고리 월별 탄소 배출량</div>
<div class="t" style="left:199.60px;top:841.00px;font-size:12.5px;line-height:18px;font-weight:400;color:#888;letter-spacing:0.074px;">(tCO2eq)</div>
<div style="left:40.00px;top:874.50px;width:1248.40px;height:29.30px;background:#f5f5f5;border-radius:8px 8px 0 0;border-bottom:1px solid #e3e3e3;"></div>
<div class="t" style="left:48.70px;top:881.60px;font-size:10.4px;line-height:16px;font-weight:400;color:#333;">항목</div>
<div class="t" style="left:163.86px;width:80px;text-align:right;top:881.60px;font-size:10.5px;line-height:16px;font-weight:400;color:#333;">1월</div>
<div class="t" style="left:250.22px;width:80px;text-align:right;top:881.60px;font-size:10.5px;line-height:16px;font-weight:400;color:#333;">2월</div>
<div class="t" style="left:336.58px;width:80px;text-align:right;top:881.60px;font-size:10.5px;line-height:16px;font-weight:400;color:#333;">3월</div>
<div class="t" style="left:422.95px;width:80px;text-align:right;top:881.60px;font-size:10.5px;line-height:16px;font-weight:400;color:#333;">4월</div>
<div class="t" style="left:509.31px;width:80px;text-align:right;top:881.60px;font-size:10.5px;line-height:16px;font-weight:400;color:#333;">5월</div>
<div class="t" style="left:595.67px;width:80px;text-align:right;top:881.60px;font-size:10.5px;line-height:16px;font-weight:400;color:#333;">6월</div>
<div class="t" style="left:682.03px;width:80px;text-align:right;top:881.60px;font-size:10.5px;line-height:16px;font-weight:400;color:#333;">7월</div>
<div class="t" style="left:768.39px;width:80px;text-align:right;top:881.60px;font-size:10.5px;line-height:16px;font-weight:400;color:#333;">8월</div>
<div class="t" style="left:854.75px;width:80px;text-align:right;top:881.60px;font-size:10.5px;line-height:16px;font-weight:400;color:#333;">9월</div>
<div class="t" style="left:941.12px;width:80px;text-align:right;top:881.60px;font-size:10.5px;line-height:16px;font-weight:400;color:#333;">10월</div>
<div class="t" style="left:1027.48px;width:80px;text-align:right;top:881.60px;font-size:10.5px;line-height:16px;font-weight:400;color:#333;">11월</div>
<div class="t" style="left:1113.84px;width:80px;text-align:right;top:881.60px;font-size:10.5px;line-height:16px;font-weight:400;color:#333;">12월</div>
<div class="t" style="left:1200.20px;width:80px;text-align:right;top:881.60px;font-size:10.5px;line-height:16px;font-weight:400;color:#333;">합계</div>
<div style="left:40.00px;top:903.80px;width:125.70px;height:29.00px;background:#f5f5f5;border-bottom:1px solid #e3e3e3;"></div>
<div style="left:165.70px;top:903.80px;width:1122.70px;height:29.00px;background:#fff;border-bottom:1px solid #e6e6e6;"></div>
<div class="t" style="left:48.70px;top:905.60px;font-size:10.1px;line-height:14px;font-weight:500;color:#2a2a2a;letter-spacing:0.037px;">카테고리 1</div>
<div class="t" style="left:48.70px;top:918.40px;font-size:9.3px;line-height:13px;font-weight:400;color:#888;letter-spacing:0.130px;">구매한 제품 및 서비스</div>
<div class="t num" style="left:154.16px;width:90px;text-align:right;top:910.10px;font-size:11.7px;line-height:16px;font-weight:400;color:#333;letter-spacing:-0.3px;">1,546,873.020</div>
<div class="t num" style="left:240.52px;width:90px;text-align:right;top:910.10px;font-size:11.7px;line-height:16px;font-weight:400;color:#333;letter-spacing:-0.3px;">6,052,759.917</div>
<div class="t num" style="left:326.88px;width:90px;text-align:right;top:910.10px;font-size:11.7px;line-height:16px;font-weight:400;color:#333;letter-spacing:-0.3px;">7,696,214.115</div>
<div class="t num" style="left:413.25px;width:90px;text-align:right;top:910.10px;font-size:11.7px;line-height:16px;font-weight:400;color:#333;letter-spacing:-0.3px;">5,376,800.792</div>
<div class="t num" style="left:499.61px;width:90px;text-align:right;top:910.10px;font-size:11.7px;line-height:16px;font-weight:400;color:#333;letter-spacing:-0.3px;">4,761,225.136</div>
<div class="t num" style="left:585.97px;width:90px;text-align:right;top:910.10px;font-size:11.7px;line-height:16px;font-weight:400;color:#333;letter-spacing:-0.3px;">3,872,261.639</div>
<div class="t num" style="left:672.33px;width:90px;text-align:right;top:910.10px;font-size:11.7px;line-height:16px;font-weight:400;color:#333;letter-spacing:-0.3px;">2,968,185.209</div>
<div class="t num" style="left:758.69px;width:90px;text-align:right;top:910.10px;font-size:11.7px;line-height:16px;font-weight:400;color:#333;letter-spacing:-0.3px;">9,523,512.405</div>
<div class="t num" style="left:845.05px;width:90px;text-align:right;top:910.10px;font-size:11.7px;line-height:16px;font-weight:400;color:#333;letter-spacing:-0.3px;">775,529.080</div>
<div class="t num" style="left:931.42px;width:90px;text-align:right;top:910.10px;font-size:11.7px;line-height:16px;font-weight:400;color:#333;letter-spacing:-0.3px;">5,195,778.947</div>
<div class="t num" style="left:1017.78px;width:90px;text-align:right;top:910.10px;font-size:11.7px;line-height:16px;font-weight:400;color:#333;letter-spacing:-0.3px;">9,564,453.171</div>
<div class="t num" style="left:1104.14px;width:90px;text-align:right;top:910.10px;font-size:11.7px;line-height:16px;font-weight:400;color:#333;letter-spacing:-0.3px;">7,160,812.200</div>
<div class="t num" style="left:1190.50px;width:90px;text-align:right;top:910.10px;font-size:11.7px;line-height:16px;font-weight:400;color:#333;letter-spacing:-0.3px;">820,329.525</div>
<div style="left:40.00px;top:932.80px;width:125.70px;height:29.00px;background:#f5f5f5;border-bottom:1px solid #e3e3e3;"></div>
<div style="left:165.70px;top:932.80px;width:1122.70px;height:29.00px;background:#fff;border-bottom:1px solid #e6e6e6;"></div>
<div class="t" style="left:48.70px;top:934.60px;font-size:10.1px;line-height:14px;font-weight:500;color:#2a2a2a;letter-spacing:0.037px;">카테고리 2</div>
<div class="t" style="left:48.70px;top:947.40px;font-size:9.3px;line-height:13px;font-weight:400;color:#888;letter-spacing:0.199px;">구매한 자본재</div>
<div class="t num" style="left:154.16px;width:90px;text-align:right;top:939.10px;font-size:11.7px;line-height:16px;font-weight:400;color:#333;letter-spacing:-0.3px;">1,546,873.020</div>
<div class="t num" style="left:240.52px;width:90px;text-align:right;top:939.10px;font-size:11.7px;line-height:16px;font-weight:400;color:#333;letter-spacing:-0.3px;">5,301,744.656</div>
<div class="t num" style="left:326.88px;width:90px;text-align:right;top:939.10px;font-size:11.7px;line-height:16px;font-weight:400;color:#333;letter-spacing:-0.3px;">9,359,404.912</div>
<div class="t num" style="left:413.25px;width:90px;text-align:right;top:939.10px;font-size:11.7px;line-height:16px;font-weight:400;color:#333;letter-spacing:-0.3px;">5,810,153.797</div>
<div class="t num" style="left:499.61px;width:90px;text-align:right;top:939.10px;font-size:11.7px;line-height:16px;font-weight:400;color:#333;letter-spacing:-0.3px;">2,324,696.236</div>
<div class="t num" style="left:585.97px;width:90px;text-align:right;top:939.10px;font-size:11.7px;line-height:16px;font-weight:400;color:#333;letter-spacing:-0.3px;">4,631,917.434</div>
<div class="t num" style="left:672.33px;width:90px;text-align:right;top:939.10px;font-size:11.7px;line-height:16px;font-weight:400;color:#333;letter-spacing:-0.3px;">3,184,393.466</div>
<div class="t num" style="left:758.69px;width:90px;text-align:right;top:939.10px;font-size:11.7px;line-height:16px;font-weight:400;color:#333;letter-spacing:-0.3px;">2,780,369.256</div>
<div class="t num" style="left:845.05px;width:90px;text-align:right;top:939.10px;font-size:11.7px;line-height:16px;font-weight:400;color:#333;letter-spacing:-0.3px;">1,686,573.539</div>
<div class="t num" style="left:931.42px;width:90px;text-align:right;top:939.10px;font-size:11.7px;line-height:16px;font-weight:400;color:#333;letter-spacing:-0.3px;">348,340.794</div>
<div class="t num" style="left:1017.78px;width:90px;text-align:right;top:939.10px;font-size:11.7px;line-height:16px;font-weight:400;color:#333;letter-spacing:-0.3px;">8,598,279.428</div>
<div class="t num" style="left:1104.14px;width:90px;text-align:right;top:939.10px;font-size:11.7px;line-height:16px;font-weight:400;color:#333;letter-spacing:-0.3px;">9,695,036.555</div>
<div class="t num" style="left:1190.50px;width:90px;text-align:right;top:939.10px;font-size:11.7px;line-height:16px;font-weight:400;color:#333;letter-spacing:-0.3px;">2,403,772.699</div>
<div style="left:40.00px;top:961.80px;width:125.70px;height:29.00px;background:#f5f5f5;border-bottom:1px solid #e3e3e3;"></div>
<div style="left:165.70px;top:961.80px;width:1122.70px;height:29.00px;background:#fff;border-bottom:1px solid #e6e6e6;"></div>
<div class="t" style="left:48.70px;top:963.60px;font-size:10.1px;line-height:14px;font-weight:500;color:#2a2a2a;letter-spacing:0.037px;">카테고리 3</div>
<div class="t" style="left:48.70px;top:976.40px;font-size:9.3px;line-height:13px;font-weight:400;color:#888;letter-spacing:0.454px;">Upstream 에너지</div>
<div class="t num" style="left:154.16px;width:90px;text-align:right;top:968.10px;font-size:11.7px;line-height:16px;font-weight:400;color:#333;letter-spacing:-0.3px;">1,546,873.020</div>
<div class="t num" style="left:240.52px;width:90px;text-align:right;top:968.10px;font-size:11.7px;line-height:16px;font-weight:400;color:#333;letter-spacing:-0.3px;">3,344,147.112</div>
<div class="t num" style="left:326.88px;width:90px;text-align:right;top:968.10px;font-size:11.7px;line-height:16px;font-weight:400;color:#333;letter-spacing:-0.3px;">5,108,368.406</div>
<div class="t num" style="left:413.25px;width:90px;text-align:right;top:968.10px;font-size:11.7px;line-height:16px;font-weight:400;color:#333;letter-spacing:-0.3px;">4,478,328.159</div>
<div class="t num" style="left:499.61px;width:90px;text-align:right;top:968.10px;font-size:11.7px;line-height:16px;font-weight:400;color:#333;letter-spacing:-0.3px;">2,578,275.769</div>
<div class="t num" style="left:585.97px;width:90px;text-align:right;top:968.10px;font-size:11.7px;line-height:16px;font-weight:400;color:#333;letter-spacing:-0.3px;">6,560,238.794</div>
<div class="t num" style="left:672.33px;width:90px;text-align:right;top:968.10px;font-size:11.7px;line-height:16px;font-weight:400;color:#333;letter-spacing:-0.3px;">352,158.986</div>
<div class="t num" style="left:758.69px;width:90px;text-align:right;top:968.10px;font-size:11.7px;line-height:16px;font-weight:400;color:#333;letter-spacing:-0.3px;">6,750,558.945</div>
<div class="t num" style="left:845.05px;width:90px;text-align:right;top:968.10px;font-size:11.7px;line-height:16px;font-weight:400;color:#333;letter-spacing:-0.3px;">2,550,145.847</div>
<div class="t num" style="left:931.42px;width:90px;text-align:right;top:968.10px;font-size:11.7px;line-height:16px;font-weight:400;color:#333;letter-spacing:-0.3px;">2,456,090.074</div>
<div class="t num" style="left:1017.78px;width:90px;text-align:right;top:968.10px;font-size:11.7px;line-height:16px;font-weight:400;color:#333;letter-spacing:-0.3px;">2,308,666.201</div>
<div class="t num" style="left:1104.14px;width:90px;text-align:right;top:968.10px;font-size:11.7px;line-height:16px;font-weight:400;color:#333;letter-spacing:-0.3px;">1,332,419.968</div>
<div class="t num" style="left:1190.50px;width:90px;text-align:right;top:968.10px;font-size:11.7px;line-height:16px;font-weight:400;color:#333;letter-spacing:-0.3px;">2,968,185.209</div>
<div style="left:40.00px;top:990.80px;width:125.70px;height:29.00px;background:#f5f5f5;border-bottom:1px solid #e3e3e3;"></div>
<div style="left:165.70px;top:990.80px;width:1122.70px;height:29.00px;background:#fff;border-bottom:1px solid #e6e6e6;"></div>
<div class="t" style="left:48.70px;top:992.60px;font-size:10.1px;line-height:14px;font-weight:500;color:#2a2a2a;letter-spacing:0.037px;">카테고리 4</div>
<div class="t" style="left:48.70px;top:1005.40px;font-size:9.3px;line-height:13px;font-weight:400;color:#888;letter-spacing:0.637px;">Upstream 운송 및 유통</div>
<div class="t num" style="left:154.16px;width:90px;text-align:right;top:997.10px;font-size:11.7px;line-height:16px;font-weight:400;color:#333;letter-spacing:-0.3px;">1,546,873.020</div>
<div class="t num" style="left:240.52px;width:90px;text-align:right;top:997.10px;font-size:11.7px;line-height:16px;font-weight:400;color:#333;letter-spacing:-0.3px;">6,603,497.701</div>
<div class="t num" style="left:326.88px;width:90px;text-align:right;top:997.10px;font-size:11.7px;line-height:16px;font-weight:400;color:#333;letter-spacing:-0.3px;">7,078,429.811</div>
<div class="t num" style="left:413.25px;width:90px;text-align:right;top:997.10px;font-size:11.7px;line-height:16px;font-weight:400;color:#333;letter-spacing:-0.3px;">628,227.251</div>
<div class="t num" style="left:499.61px;width:90px;text-align:right;top:997.10px;font-size:11.7px;line-height:16px;font-weight:400;color:#333;letter-spacing:-0.3px;">8,149,593.203</div>
<div class="t num" style="left:585.97px;width:90px;text-align:right;top:997.10px;font-size:11.7px;line-height:16px;font-weight:400;color:#333;letter-spacing:-0.3px;">5,468,957.005</div>
<div class="t num" style="left:672.33px;width:90px;text-align:right;top:997.10px;font-size:11.7px;line-height:16px;font-weight:400;color:#333;letter-spacing:-0.3px;">8,735,863.926</div>
<div class="t num" style="left:758.69px;width:90px;text-align:right;top:997.10px;font-size:11.7px;line-height:16px;font-weight:400;color:#333;letter-spacing:-0.3px;">2,561,218.365</div>
<div class="t num" style="left:845.05px;width:90px;text-align:right;top:997.10px;font-size:11.7px;line-height:16px;font-weight:400;color:#333;letter-spacing:-0.3px;">2,561,218.365</div>
<div class="t num" style="left:931.42px;width:90px;text-align:right;top:997.10px;font-size:11.7px;line-height:16px;font-weight:400;color:#333;letter-spacing:-0.3px;">2,561,218.365</div>
<div class="t num" style="left:1017.78px;width:90px;text-align:right;top:997.10px;font-size:11.7px;line-height:16px;font-weight:400;color:#333;letter-spacing:-0.3px;">2,561,218.365</div>
<div class="t num" style="left:1104.14px;width:90px;text-align:right;top:997.10px;font-size:11.7px;line-height:16px;font-weight:400;color:#333;letter-spacing:-0.3px;">573,688.296</div>
<div class="t num" style="left:1190.50px;width:90px;text-align:right;top:997.10px;font-size:11.7px;line-height:16px;font-weight:400;color:#333;letter-spacing:-0.3px;">5,108,368.406</div>
<div style="left:1202.04px;top:931.00px;width:86.36px;height:2.20px;background:#f1f1f1;"></div>
<div style="left:1202.04px;top:960.00px;width:86.36px;height:2.20px;background:#f1f1f1;"></div>
<div style="left:1202.04px;top:989.00px;width:86.36px;height:2.20px;background:#f1f1f1;"></div>
<div style="left:1202.04px;top:1018.00px;width:86.36px;height:2.20px;background:#f1f1f1;"></div>
<div class="card" style="left:1338.00px;top:258.00px;width:413.00px;height:218.00px;border-radius:17px;"></div>
<div class="t" style="left:1360.50px;top:281.60px;font-size:19px;line-height:26px;font-weight:700;color:#222;letter-spacing:0.052px;">탄소 배출량</div>
<div class="t" style="left:1457.60px;top:283.40px;font-size:16.6px;line-height:24px;font-weight:400;color:#888;letter-spacing:0.219px;">(tCO2eq)</div>
<div style="left:1511.00px;top:322.00px;width:69.40px;height:22.60px;border:1.5px solid #5e9b32;border-radius:12px;"></div>
<div class="t" style="left:1511.10px;width:69px;text-align:center;top:324.60px;font-size:13.6px;line-height:18px;font-weight:400;color:#5e9b32;letter-spacing:0.373px;">Scope 3</div>
<div class="t" style="left:1489.30px;top:349.60px;font-size:20px;line-height:28px;font-weight:700;color:#2a2a2a;letter-spacing:-0.596px;">카테고리 전체</div>
<div class="t big" style="left:1456.40px;top:385.60px;font-size:32px;line-height:40px;font-weight:700;color:#2b2b2b;letter-spacing:0.004px;">251,836.255</div>
<div class="t cmp" style="left:1442.60px;top:436.70px;font-size:13.6px;line-height:18px;font-weight:500;color:#333;letter-spacing:0.083px;">전년 동기 대비 <span style="-webkit-text-stroke:0.35px #333">24.850</span></div>
<div style="left:1576.70px;top:437.10px;width:72.00px;height:17.20px;border:1px solid #3b8ae6;border-radius:9px;background:#fff;"></div>
<svg style="left:1583.30px;top:442.10px" width="10" height="8" viewBox="0 0 10 8"><path d="M0.6 1.6 L4.9 5.9 L9.2 1.6" fill="none" stroke="#1f74dc" stroke-width="1.6"/></svg>
<div class="t" style="left:1597.10px;top:438.00px;font-size:12.8px;line-height:16px;font-weight:700;color:#1f74dc;letter-spacing:0.132px;">20.00%</div>
<div class="card" style="left:1338.00px;top:502.00px;width:413.00px;height:440.00px;border-radius:17px;"></div>
<div class="t" style="left:1358.70px;top:524.00px;font-size:20px;line-height:28px;font-weight:700;color:#2a2a2a;letter-spacing:-0.496px;">최대/최소 탄소 배출량 분석</div>
<div class="card" style="left:1358.00px;top:565.00px;width:373.00px;height:167.50px;border-radius:17px;"></div>
<div class="t ttl" style="left:1440.10px;top:590.80px;font-size:20px;line-height:28px;font-weight:700;color:#2a2a2a;letter-spacing:-0.658px;">최대 탄소 배출량</div>
<div class="t" style="left:1579.60px;top:593.40px;font-size:16.6px;line-height:24px;font-weight:400;color:#888;letter-spacing:0.144px;">(tCO2eq)</div>
<div style="left:1438.30px;top:624.80px;width:16.60px;height:16.20px;background:#cee8aa;border-radius:2.5px;"></div>
<div class="t sw" style="left:1459.40px;top:623.20px;font-size:13.5px;line-height:20px;font-weight:400;color:#999;letter-spacing:-0.310px;">카테고리 1 (구매한 제품 및 서비스)</div>
<div class="t big" style="left:1454.60px;top:645.30px;font-size:32.5px;line-height:40px;font-weight:700;color:#000;letter-spacing:-0.230px;">251,836.255</div>
<div class="t cmp" style="left:1442.10px;top:690.00px;font-size:13.6px;line-height:18px;font-weight:500;color:#333;letter-spacing:0.083px;">전년 동기 대비 <span style="-webkit-text-stroke:0.35px #333">24.850</span></div>
<div style="left:1576.20px;top:690.40px;width:72.00px;height:17.20px;border:1px solid #3b8ae6;border-radius:9px;background:#fff;"></div>
<svg style="left:1582.80px;top:695.40px" width="10" height="8" viewBox="0 0 10 8"><path d="M0.6 1.6 L4.9 5.9 L9.2 1.6" fill="none" stroke="#1f74dc" stroke-width="1.6"/></svg>
<div class="t" style="left:1596.60px;top:691.30px;font-size:12.8px;line-height:16px;font-weight:700;color:#1f74dc;letter-spacing:0.132px;">20.00%</div>
<div class="card" style="left:1358.00px;top:753.00px;width:373.00px;height:167.50px;border-radius:17px;"></div>
<div class="t ttl" style="left:1440.10px;top:778.80px;font-size:20px;line-height:28px;font-weight:700;color:#2a2a2a;letter-spacing:-0.658px;">최소 탄소 배출량</div>
<div class="t" style="left:1579.60px;top:781.40px;font-size:16.6px;line-height:24px;font-weight:400;color:#888;letter-spacing:0.144px;">(tCO2eq)</div>
<div style="left:1481.30px;top:812.80px;width:16.60px;height:16.20px;background:#4a5fcb;border-radius:2.5px;"></div>
<div class="t sw" style="left:1502.10px;top:811.20px;font-size:13.5px;line-height:20px;font-weight:400;color:#999;letter-spacing:-0.136px;">카테고리 15 (투자)</div>
<div class="t big" style="left:1473.60px;top:833.30px;font-size:32.5px;line-height:40px;font-weight:700;color:#000;letter-spacing:-0.466px;">1,263.734</div>
<div class="t cmp" style="left:1442.10px;top:878.00px;font-size:13.6px;line-height:18px;font-weight:500;color:#333;letter-spacing:0.083px;">전년 동기 대비 <span style="-webkit-text-stroke:0.35px #333">24.850</span></div>
<div style="left:1576.20px;top:878.40px;width:72.00px;height:17.20px;border:1px solid #3b8ae6;border-radius:9px;background:#fff;"></div>
<svg style="left:1582.80px;top:883.40px" width="10" height="8" viewBox="0 0 10 8"><path d="M0.6 1.6 L4.9 5.9 L9.2 1.6" fill="none" stroke="#1f74dc" stroke-width="1.6"/></svg>
<div class="t" style="left:1596.60px;top:879.30px;font-size:12.8px;line-height:16px;font-weight:700;color:#1f74dc;letter-spacing:0.132px;">20.00%</div>
</div>
</body></html>
